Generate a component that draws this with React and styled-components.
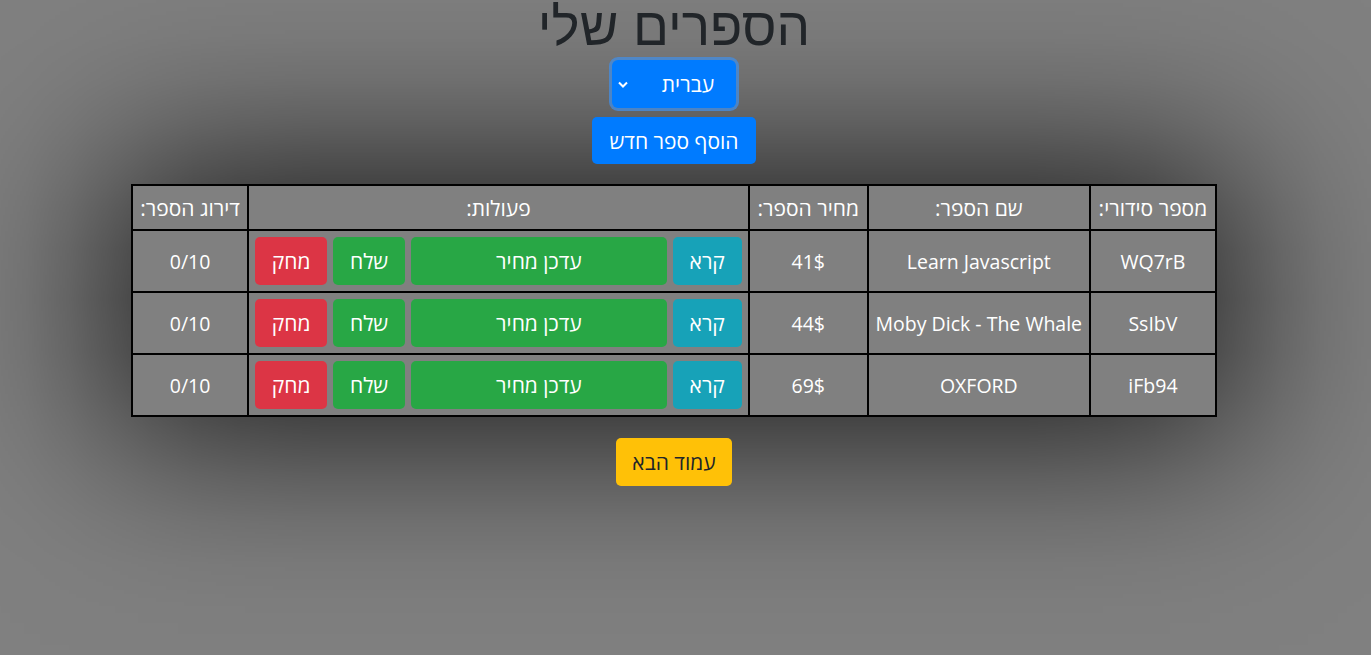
import styled, { createGlobalStyle } from "styled-components";

const Global = createGlobalStyle`
  html, body {
    margin: 0;
    background: #808080;
    direction: rtl;
    font-family: "Open Sans", "Liberation Sans", "DejaVu Sans", sans-serif;
  }
`;

// soft shadow profile (blurred edge), offsets in px from the outer edge
const EDGE = [0, 42.5, 85, 127.5, 170, 212.5, 255, 297.5, 340, 382.5, 425];
const XA = [0, 0.018, 0.054, 0.127, 0.247, 0.4, 0.553, 0.673, 0.746, 0.782, 0.8];
const YSTOPS = [
  [0, 0.006], [42.5, 0.023], [85, 0.067], [127.5, 0.159], [170, 0.309],
  [212.5, 0.499], [255, 0.687], [297.5, 0.827], [348, 0.889],
];

const xStops = [
  ...EDGE.map((p, i) => `rgba(0,0,0,${XA[i]}) ${p}px`),
  ...EDGE.slice().reverse().map((p, i) => `rgba(0,0,0,${XA[XA.length - 1 - i]}) calc(100% - ${p}px)`),
].join(", ");

const yStops = [
  ...YSTOPS.map(([p, a]) => `rgba(0,0,0,${a}) ${p}px`),
  ...YSTOPS.slice(0, -1).reverse().map(([p, a]) => `rgba(0,0,0,${a}) calc(100% - ${p}px)`),
].join(", ");

const Page = styled.div`
  position: relative;
  isolation: isolate;
  display: flex;
  flex-direction: column;
  align-items: center;
  min-height: 655px;
  padding-right: 23px;
  overflow: hidden;
`;

const Title = styled.h1`
  margin: 0;
  font-family: "Liberation Sans", "DejaVu Sans", sans-serif;
  font-size: 53px;
  font-weight: 500;
  line-height: 50px;
  padding-top: 2px;
  color: #212529;
`;

const LangSelect = styled.div`
  margin-top: 8px;
  width: 124px;
  height: 48px;
  box-sizing: border-box;
  background: #007bff;
  border-radius: 6px;
  box-shadow: 0 0 0 3px rgba(70, 140, 220, 0.8);
  color: #fff;
  font-size: 21px;
  display: flex;
  align-items: center;
  justify-content: space-between;
  padding: 0 22px 0 5px;
`;

const Button = styled.button`
  border: none;
  border-radius: 5px;
  font-family: "Open Sans", "Liberation Sans", "DejaVu Sans", sans-serif;
  font-size: 21px;
  height: 48px;
  padding: 0;
  color: ${(p) => (p.$dark ? "#212529" : "#fff")};
  background: ${(p) => p.$bg};
  flex: ${(p) => (p.$grow ? "1" : "none")};
  width: ${(p) => p.$w || "auto"};
`;

const AddButton = styled(Button)`
  margin-top: 9px;
  width: 164px;
  height: 47px;
`;

const NextButton = styled(Button)`
  margin-top: 21px;
  width: 116px;
`;

const TableWrap = styled.div`
  position: relative;
  z-index: -1;
  margin-top: 20px;

  &::before {
    content: "";
    position: absolute;
    inset: -233px;
    z-index: -1;
    background: linear-gradient(to right, ${xStops});
    -webkit-mask-image: linear-gradient(to bottom, ${yStops});
    mask-image: linear-gradient(to bottom, ${yStops});
  }
`;

const Table = styled.table`
  table-layout: fixed;
  width: 1086px;
  border-collapse: collapse;
  border: 2px solid #000;
  background: #808080;
  color: #fff;
  font-size: 19.5px;
`;

const Th = styled.th`
  border: 2px solid #000;
  font-weight: normal;
  font-size: 21px;
  height: 43px;
  padding: 0 2px;
  white-space: nowrap;
  width: ${(p) => p.$w};
`;

const Td = styled.td`
  border: 2px solid #000;
  text-align: center;
  height: 60px;
  padding: 0 6px;
  white-space: nowrap;
`;

const Actions = styled.div`
  display: flex;
  gap: 6px;
`;

const rows = [
  { id: "WQ7rB", name: "Learn Javascript", price: "41$" },
  { id: "SsIbV", name: "Moby Dick - The Whale", price: "44$" },
  { id: "iFb94", name: "OXFORD", price: "69$" },
];

export default function App() {
  return (
    <Page>
      <Global />
      <Title>הספרים שלי</Title>
      <LangSelect>
        <span>עברית</span>
        <svg width="12" height="9" viewBox="0 0 12 9">
          <path d="M2 2.5 L6 6.5 L10 2.5" stroke="#fff" strokeWidth="2" fill="none" />
        </svg>
      </LangSelect>
      <AddButton $bg="#007bff">הוסף ספר חדש</AddButton>
      <TableWrap>
        <Table>
          <thead>
            <tr>
              <Th $w="119px">מספר סידורי:</Th>
              <Th $w="214px">שם הספר:</Th>
              <Th $w="112px">מחיר הספר:</Th>
              <Th $w="490px">פעולות:</Th>
              <Th $w="109px">דירוג הספר:</Th>
            </tr>
          </thead>
          <tbody>
            {rows.map((r) => (
              <tr key={r.id}>
                <Td>{r.id}</Td>
                <Td>{r.name}</Td>
                <Td>{r.price}</Td>
                <Td>
                  <Actions>
                    <Button $bg="#17a2b8" $w="69px">קרא</Button>
                    <Button $bg="#28a745" $grow>עדכן מחיר</Button>
                    <Button $bg="#28a745" $w="72px">שלח</Button>
                    <Button $bg="#dc3545" $w="72px">מחק</Button>
                  </Actions>
                </Td>
                <Td>0/10</Td>
              </tr>
            ))}
          </tbody>
        </Table>
      </TableWrap>
      <NextButton $bg="#ffc107" $dark>עמוד הבא</NextButton>
    </Page>
  );
}
